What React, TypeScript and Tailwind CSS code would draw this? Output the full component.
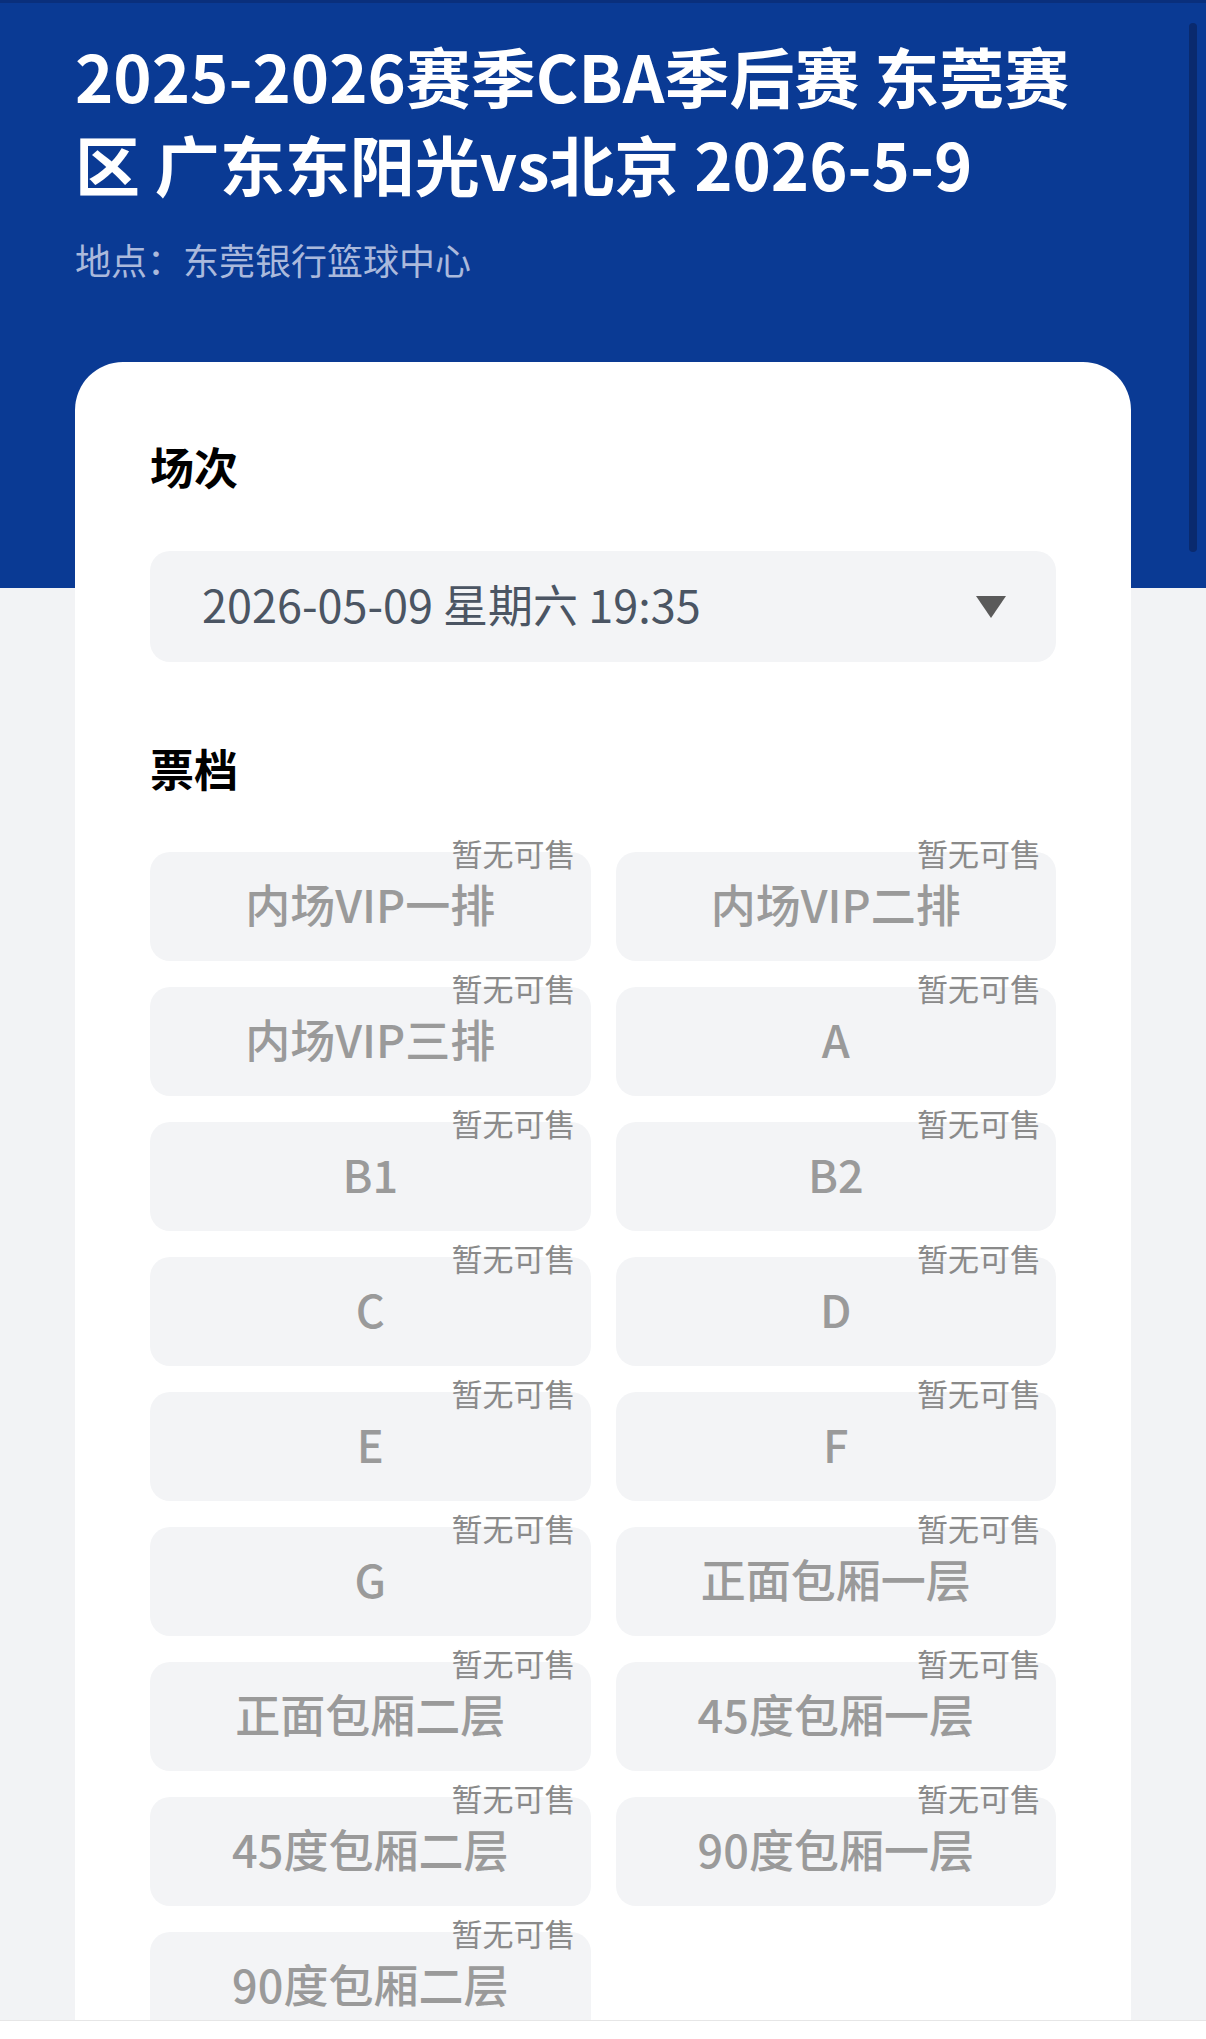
const tiers = [
  '内场VIP一排',
  '内场VIP二排',
  '内场VIP三排',
  'A',
  'B1',
  'B2',
  'C',
  'D',
  'E',
  'F',
  'G',
  '正面包厢一层',
  '正面包厢二层',
  '45度包厢一层',
  '45度包厢二层',
  '90度包厢一层',
  '90度包厢二层',
];

function TierButton({ name }: { name: string }) {
  return (
    <div className="relative">
      <button
        type="button"
        disabled
        className="flex h-[109px] w-full items-center justify-center rounded-[20px] bg-[#f3f4f6] pb-[6px] text-[45px] font-medium leading-none text-[#9a9a9a]"
      >
        {name}
      </button>
      <span className="absolute right-[15px] top-[-17px] text-[31px] leading-[36px] text-[#8a8a8a]">
        暂无可售
      </span>
    </div>
  );
}

export default function App() {
  return (
    <div className="min-h-screen bg-[#f2f3f5] font-['Noto_Sans_CJK_SC',sans-serif]">
      {/* Header */}
      <div className="h-[3px] bg-[#0a2f7c]" />
      <div className="h-[585px] bg-[#0a3a94] px-[75px] pt-[28px]">
        <h1 className="text-[65px] font-bold leading-[88px] text-white">
          2025-2026赛季CBA季后赛 东莞赛区 广东东阳光vs北京 2026-5-9
        </h1>
        <p className="mt-[27px] text-[36px] leading-[50px] text-[#aab9dc]">
          地点：东莞银行篮球中心
        </p>
      </div>

      {/* Card */}
      <div className="mx-[75px] -mt-[226px] rounded-t-[48px] bg-white px-[75px] pb-[80px] pt-[73px]">
        <h2 className="text-[44px] font-bold leading-[62px] text-black">场次</h2>
        <div className="mt-[54px] flex h-[111px] items-center justify-between rounded-[20px] bg-[#f3f4f6] pl-[52px] pr-[50px]">
          <span className="pb-[6px] text-[45px] leading-none text-[#4b5563]">2026-05-09 星期六 19:35</span>
          <svg aria-hidden="true" width="30" height="22" viewBox="0 0 30 22">
            <path d="M0 0h30L15 22z" fill="#5a5a5a" />
          </svg>
        </div>

        <h2 className="mt-[75px] text-[44px] font-bold leading-[62px] text-black">票档</h2>
        <div className="mt-[53px] grid grid-cols-2 gap-x-[25px] gap-y-[26px]">
          {tiers.map((t) => (
            <TierButton key={t} name={t} />
          ))}
        </div>
      </div>

      {/* scrollbar + bottom bar overlays */}
      <div className="fixed right-[9px] top-[23px] h-[529px] w-[8px] rounded-full bg-[#0a2a6e]" />
      <div className="fixed inset-x-0 bottom-0 h-[19px] border-t border-[#e6e6e6] bg-white" />
    </div>
  );
}
